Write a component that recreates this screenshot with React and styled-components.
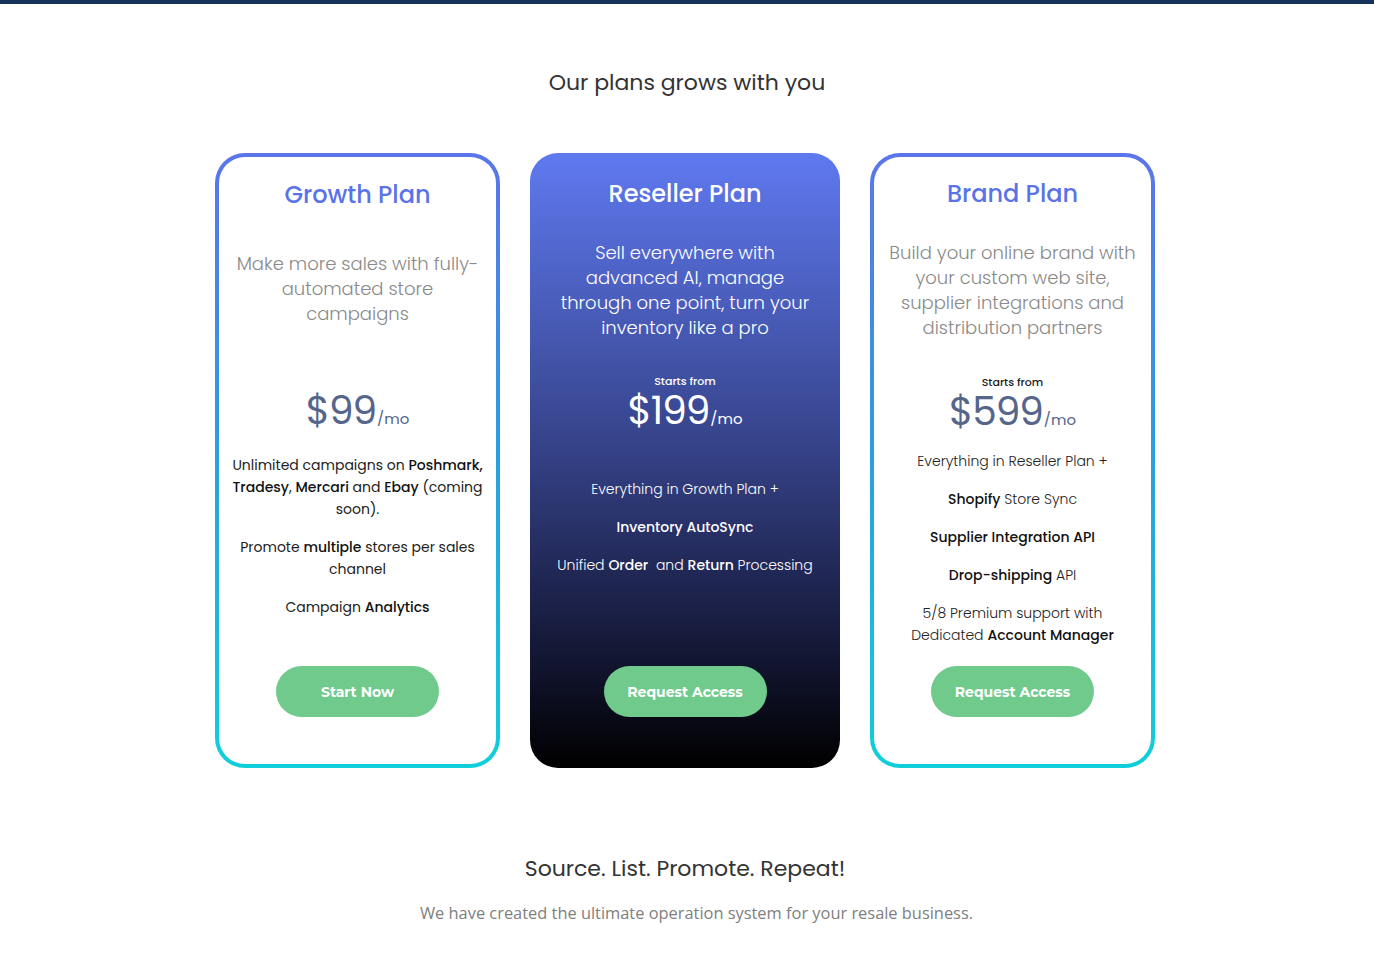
import React from "react";
import styled, { createGlobalStyle, css } from "styled-components";

const GlobalStyle = createGlobalStyle`
  html, body {
    margin: 0;
    padding: 0;
    background: #ffffff;
    font-family: "Poppins", "Open Sans", sans-serif;
  }
`;

const Page = styled.div`
  border-top: 4px solid #14335a;
  min-height: 959px;
  display: flex;
  flex-direction: column;
  align-items: center;
`;

const Heading = styled.h2`
  margin: 65px 0 0;
  font-size: 22px;
  line-height: 28px;
  font-weight: 400;
  color: #333;
`;

const Cards = styled.div`
  margin: 56px 4px 0 0;
  display: flex;
  gap: 30px;
  align-items: stretch;
`;

const Card = styled.section`
  box-sizing: border-box;
  width: ${(p) => (p.featured ? 310 : 285)}px;
  height: 615px;
  display: flex;
  flex-direction: column;
  align-items: center;
  text-align: center;
  ${(p) =>
    p.featured
      ? css`
          border: none;
          border-radius: 28px;
          padding: 26px 18px 51px;
          background: linear-gradient(180deg, #5f79f0 0%, #38468f 45%, #1a1f45 75%, #000 100%);
          color: #fff;
        `
      : css`
          border: 4px solid transparent;
          border-radius: 30px;
          padding: 22px 14px 47px;
          background: linear-gradient(#fff, #fff) padding-box,
            linear-gradient(180deg, #5b74ea 0%, #2a9fe0 50%, #10cfd9 100%) border-box;
          color: #222;
        `}
`;

const Title = styled.h3`
  margin: ${(p) => p.top || 0}px 0 0;
  font-size: 24px;
  line-height: 30px;
  font-weight: 500;
  color: ${(p) => (p.light ? "#fff" : "#5b73e8")};
`;

const Desc = styled.p`
  margin: ${(p) => p.top}px 0 0;
  font-size: 18px;
  line-height: 25px;
  font-weight: 300;
  color: ${(p) => (p.light ? "#fff" : "#8a8a8a")};
`;

const PriceBlock = styled.div`
  margin-top: ${(p) => p.top}px;
  display: flex;
  flex-direction: column;
  align-items: center;
  gap: 6px;
`;

const Starts = styled.span`
  font-size: 11px;
  line-height: 14px;
  font-weight: 500;
  color: ${(p) => (p.light ? "#fff" : "#222")};
`;

const Price = styled.div`
  font-size: 39px;
  line-height: 34px;
  font-weight: 400;
  letter-spacing: -1px;
  color: ${(p) => (p.light ? "#fff" : "#56658a")};
  small {
    font-size: 15px;
    line-height: 0;
    letter-spacing: 0;
    margin-left: 1px;
  }
`;

const Features = styled.div`
  margin-top: ${(p) => p.top}px;
  display: flex;
  flex-direction: column;
  gap: 16px;
`;

const Feature = styled.p`
  margin: 0;
  font-size: 14px;
  line-height: 22px;
  font-weight: ${(p) => (p.thin ? 300 : 400)};
  color: ${(p) => (p.light ? "#fff" : "#222")};
  white-space: nowrap;
  b {
    font-weight: 500;
    color: ${(p) => (p.light ? "#fff" : "#111")};
  }
`;

const Button = styled.button`
  margin-top: auto;
  width: 163px;
  height: 51px;
  border: none;
  border-radius: 26px;
  background: #6fca8c;
  color: #fff;
  font-family: "Montserrat", "Open Sans", sans-serif;
  font-size: 14px;
  font-weight: 700;
  cursor: pointer;
`;

const Footer = styled.div`
  margin-top: 87px;
  display: flex;
  flex-direction: column;
  align-items: center;
`;

const Tagline = styled.h2`
  margin: 0 4px 0 0;
  font-size: 22px;
  line-height: 28px;
  font-weight: 400;
  color: #333;
`;

const Sub = styled.p`
  margin: 19px 0 0 19px;
  font-family: "Open Sans", sans-serif;
  font-size: 16.4px;
  line-height: 22px;
  color: #808080;
`;

export default function App() {
  return (
    <Page>
      <GlobalStyle />
      <Heading>Our plans grows with you</Heading>
      <Cards>
        <Card>
          <Title top={1}>Growth Plan</Title>
          <Desc top={41}>
            Make more sales with fully-
            <br />
            automated store
            <br />
            campaigns
          </Desc>
          <PriceBlock top={68}>
            <Price>
              $99<small>/mo</small>
            </Price>
          </PriceBlock>
          <Features top={26}>
            <Feature>
              Unlimited campaigns on <b>Poshmark,</b>
              <br />
              <b>Tradesy</b>, <b>Mercari</b> and <b>Ebay</b> (coming
              <br />
              soon).
            </Feature>
            <Feature>
              Promote <b>multiple</b> stores per sales
              <br />
              channel
            </Feature>
            <Feature>
              Campaign <b>Analytics</b>
            </Feature>
          </Features>
          <Button>Start Now</Button>
        </Card>

        <Card featured>
          <Title light>Reseller Plan</Title>
          <Desc light top={31}>
            Sell everywhere with
            <br />
            advanced AI, manage
            <br />
            through one point, turn your
            <br />
            inventory like a pro
          </Desc>
          <PriceBlock top={34}>
            <Starts light>Starts from</Starts>
            <Price light>
              $199<small>/mo</small>
            </Price>
          </PriceBlock>
          <Features top={50}>
            <Feature light thin>Everything in Growth Plan +</Feature>
            <Feature light>
              <b>Inventory AutoSync</b>
            </Feature>
            <Feature light thin>
              Unified <b>Order</b>&nbsp; and <b>Return</b> Processing
            </Feature>
          </Features>
          <Button>Request Access</Button>
        </Card>

        <Card>
          <Title>Brand Plan</Title>
          <Desc top={31}>
            Build your online brand with
            <br />
            your custom web site,
            <br />
            supplier integrations and
            <br />
            distribution partners
          </Desc>
          <PriceBlock top={35}>
            <Starts>Starts from</Starts>
            <Price>
              $599<small>/mo</small>
            </Price>
          </PriceBlock>
          <Features top={21}>
            <Feature thin>Everything in Reseller Plan +</Feature>
            <Feature thin>
              <b>Shopify</b> Store Sync
            </Feature>
            <Feature>
              <b>Supplier Integration API</b>
            </Feature>
            <Feature thin>
              <b>Drop-shipping</b> API
            </Feature>
            <Feature thin>
              5/8 Premium support with
              <br />
              Dedicated <b>Account Manager</b>
            </Feature>
          </Features>
          <Button>Request Access</Button>
        </Card>
      </Cards>
      <Footer>
        <Tagline>Source. List. Promote. Repeat!</Tagline>
        <Sub>We have created the ultimate operation system for your resale business.</Sub>
      </Footer>
    </Page>
  );
}
